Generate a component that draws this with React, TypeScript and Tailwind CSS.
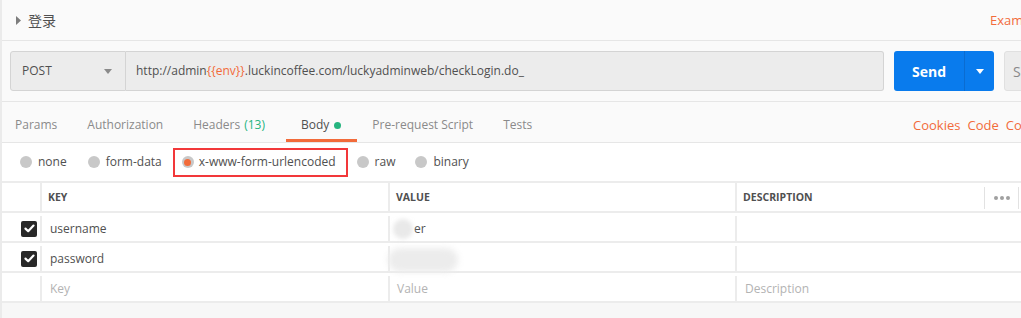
import React from "react";

const Radio = ({ selected }: { selected?: boolean }) => (
  <span className="w-[12px] h-[12px] rounded-full bg-[#c8c8c8] flex items-center justify-center shrink-0">
    {selected && <span className="w-[7px] h-[7px] rounded-full bg-[#f26b3a]" />}
  </span>
);

const Check = () => (
  <span className="w-[16px] h-[16px] rounded-[2px] bg-[#282828] flex items-center justify-center">
    <svg width="11" height="9" viewBox="0 0 11 9">
      <path d="M1.5 4.6 L4.2 7.2 L9.5 1.6" stroke="#fff" strokeWidth="2.2" fill="none" strokeLinecap="round" strokeLinejoin="round" />
    </svg>
  </span>
);

export default function App() {
  const tabs = [
    { label: "Params", cls: "pl-[13px] pr-[15px]" },
    { label: "Authorization", cls: "px-[15px]" },
    { label: "Headers", count: "(13)", cls: "pl-[15px] pr-[21px]" },
    { label: "Body", active: true, cls: "pl-[15px] pr-[16px]" },
    { label: "Pre-request Script", cls: "px-[15px]" },
    { label: "Tests", cls: "px-[15px]" },
  ];
  return (
    <div
      className="w-[1021px] h-[318px] overflow-hidden bg-white border-l-2 border-[#ebebeb] text-[12px] text-[#505050] flex flex-col"
      style={{ fontFamily: "'Open Sans', 'Noto Sans CJK SC', sans-serif" }}
    >
      {/* Header */}
      <div className="h-[41px] shrink-0 bg-[#fafafa] border-b border-[#e6e6e6] flex items-center overflow-hidden">
        <div className="w-[988px] shrink-0 flex items-center pl-[14px]">
          <svg width="5" height="9" viewBox="0 0 5 9" className="mt-[1px]">
            <path d="M0 0 L5 4.5 L0 9 Z" fill="#7d7d7d" />
          </svg>
          <span className="ml-[7px] text-[14px] text-[#505050]" style={{ fontFamily: "'Noto Sans CJK SC', sans-serif" }}>
            登录
          </span>
        </div>
        <span className="whitespace-nowrap text-[13px] text-[#f26b3a] mt-[2px]">Examples (0)</span>
      </div>

      {/* URL row */}
      <div className="shrink-0 bg-[#fafafa] pt-[10px] pb-[10px] pl-[8px] border-b border-[#e6e6e6] flex overflow-hidden">
        <div className="w-[116px] h-[40px] shrink-0 bg-[#ececec] border border-[#d4d4d4] rounded-l-[3px] flex items-center justify-between pl-[11px] pr-[13px] text-[12px]">
          <span>POST</span>
          <svg width="8" height="5" viewBox="0 0 8 5">
            <path d="M0 0 L8 0 L4 5 Z" fill="#8a8a8a" />
          </svg>
        </div>
        <div className="w-[758px] h-[40px] shrink-0 bg-[#ececec] border-y border-r border-[#d4d4d4] rounded-r-[3px] flex items-center pl-[10px]">
          <span className="text-[12px]">
            http://admin<span className="text-[#f26b3a]">{"{{env}}"}</span>.luckincoffee.com/luckyadminweb/checkLogin.do_
          </span>
        </div>
        <div className="ml-[10px] w-[100px] h-[40px] shrink-0 bg-[#097bed] rounded-[3px] flex text-white">
          <div className="w-[70px] flex items-center justify-center font-bold text-[14px]">Send</div>
          <div className="w-px bg-[#0a6cd1]" />
          <div className="flex-1 flex items-center justify-center">
            <svg width="8" height="5" viewBox="0 0 8 5">
              <path d="M0 0 L8 0 L4 5 Z" fill="#fff" />
            </svg>
          </div>
        </div>
        <div className="ml-[10px] w-[70px] h-[40px] shrink-0 bg-[#ececec] border border-[#e0e0e0] rounded-[3px] flex items-center pl-[8px] text-[14px] text-[#888]">
          Save
        </div>
      </div>

      {/* Tabs row */}
      <div className="h-[41px] shrink-0 bg-[#fafafa] border-b border-[#e6e6e6] flex overflow-hidden">
        <div className="w-[911px] shrink-0 flex h-full">
          {tabs.map((t) => (
            <div
              key={t.label}
              className={`h-full box-border border-b-[3px] pt-[14px] leading-[18px] flex items-start whitespace-nowrap ${
                t.active ? "border-[#f26b3a] text-[#505050]" : "border-transparent text-[#8a8a8a]"
              } ${t.cls}`}
            >
              <span>{t.label}</span>
              {t.count && <span className="ml-[4px] text-[#26b47f]">{t.count}</span>}
              {t.active && <span className="ml-[5px] mt-[6px] w-[7px] h-[7px] rounded-full bg-[#26b47f]" />}
            </div>
          ))}
        </div>
        <div className="flex gap-[7px] pt-[14px] leading-[18px] whitespace-nowrap text-[13px] text-[#f26b3a]">
          <span>Cookies</span>
          <span>Code</span>
          <span>Comments</span>
        </div>
      </div>

      {/* Radio row */}
      <div className="h-[38px] shrink-0 flex items-center pl-[18px] whitespace-nowrap">
        <div className="flex items-center gap-[6px]">
          <Radio />
          <span>none</span>
        </div>
        <div className="ml-[21px] flex items-center gap-[6px]">
          <Radio />
          <span>form-data</span>
        </div>
        <div className="ml-[11px] h-[29px] border-2 border-[#f2383a] pl-[7px] pr-[10px] flex items-center gap-[5px]">
          <Radio selected />
          <span>x-www-form-urlencoded</span>
        </div>
        <div className="ml-[9px] flex items-center gap-[6px]">
          <Radio />
          <span>raw</span>
        </div>
        <div className="ml-[20px] flex items-center gap-[6px]">
          <Radio />
          <span>binary</span>
        </div>
      </div>

      {/* Table */}
      <div className="border-t-2 border-[#ececec] shrink-0">
        {/* header */}
        <div className="h-[30px] flex border-b-2 border-[#ececec] text-[10.5px] font-bold text-[#505050]">
          <div className="w-[40px] shrink-0 border-r-2 border-[#ececec]" />
          <div className="w-[348px] shrink-0 border-r-2 border-[#ececec] flex items-center pl-[6px] pt-[1px]">KEY</div>
          <div className="w-[347px] shrink-0 border-r-2 border-[#ececec] flex items-center pl-[6px] pt-[1px]">VALUE</div>
          <div className="flex-1 flex items-center pl-[6px] pt-[1px]">
            <span className="flex-1">DESCRIPTION</span>
            <div className="h-[22px] border-l border-[#e2e2e2] w-[34px] flex items-center justify-center gap-[2px]">
              <span className="w-[4px] h-[4px] rounded-full bg-[#a0a0a0]" />
              <span className="w-[4px] h-[4px] rounded-full bg-[#a0a0a0]" />
              <span className="w-[4px] h-[4px] rounded-full bg-[#a0a0a0]" />
            </div>
            <div className="h-[22px] border-l border-[#e2e2e2] w-[3px]" />
          </div>
        </div>
        {/* username */}
        <div className="h-[30px] flex border-b-2 border-[#ececec] pt-[3px]">
          <div className="w-[40px] shrink-0 border-r-2 border-[#ececec] flex items-center pl-[19px]">
            <Check />
          </div>
          <div className="w-[348px] shrink-0 border-r-2 border-[#ececec] flex items-center pl-[8px]">username</div>
          <div className="w-[347px] shrink-0 border-r-2 border-[#ececec] flex items-center pl-[3px]">
            <span className="w-[20px] h-[20px] rounded-full bg-[#e9e9e9] blur-[2px]" />
            <span className="ml-[1px]">er</span>
          </div>
          <div className="flex-1" />
        </div>
        {/* password */}
        <div className="h-[30px] flex border-b-2 border-[#ececec] pt-[3px]">
          <div className="w-[40px] shrink-0 border-r-2 border-[#ececec] flex items-center pl-[19px]">
            <Check />
          </div>
          <div className="w-[348px] shrink-0 border-r-2 border-[#ececec] flex items-center pl-[8px]">password</div>
          <div className="w-[347px] shrink-0 border-r-2 border-[#ececec] flex items-center">
            <span className="ml-[-2px] mt-[2px] w-[70px] h-[24px] rounded-full bg-[#ececec] blur-[3px]" />
          </div>
          <div className="flex-1" />
        </div>
        {/* placeholder */}
        <div className="h-[30px] flex border-b-2 border-[#ececec] text-[#b3b3b3] pt-[3px]">
          <div className="w-[40px] shrink-0 border-r-2 border-[#ececec]" />
          <div className="w-[348px] shrink-0 border-r-2 border-[#ececec] flex items-center pl-[8px]">Key</div>
          <div className="w-[347px] shrink-0 border-r-2 border-[#ececec] flex items-center pl-[7px]">Value</div>
          <div className="flex-1 flex items-center pl-[8px]">Description</div>
        </div>
      </div>
      <div className="flex-1 bg-[#f7f7f7]" />
    </div>
  );
}
